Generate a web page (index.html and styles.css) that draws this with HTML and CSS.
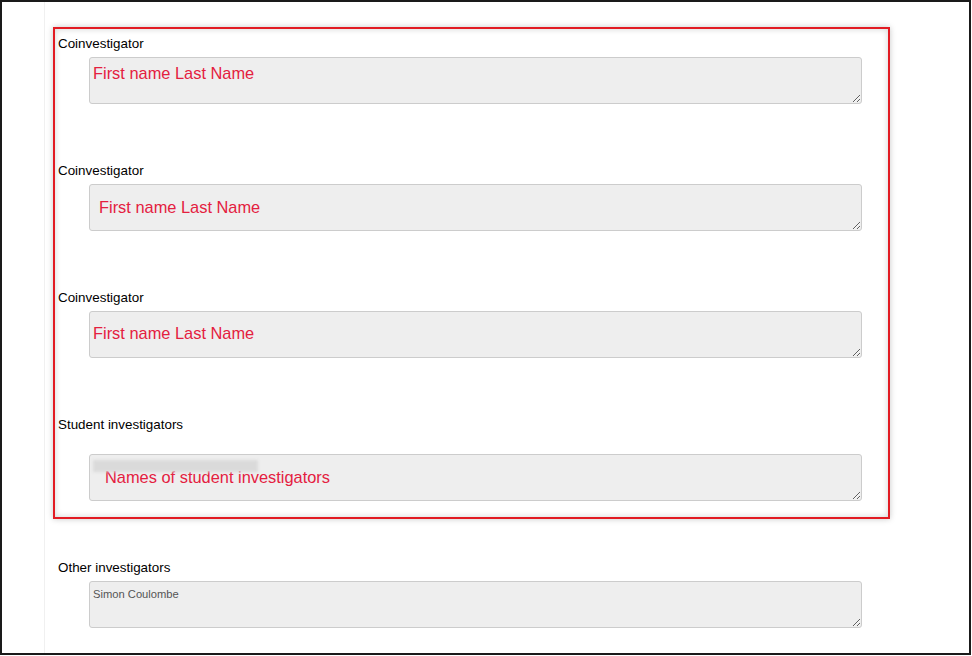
FILE: index.html
```html
<!DOCTYPE html>
<html lang="en">
<head>
  <meta charset="UTF-8">
  <title>Investigators</title>
  <link rel="stylesheet" href="styles.css">
</head>
<body>

  <div class="frame">
    <div class="panel">

      <!-- Highlighted block -->
      <div class="highlight">
        <div class="group">
          <label class="label">Coinvestigator</label>
          <textarea class="field note field-1">First name Last Name</textarea>
        </div>
        <div class="group">
          <label class="label">Coinvestigator</label>
          <textarea class="field note field-2">First name Last Name</textarea>
        </div>
        <div class="group">
          <label class="label">Coinvestigator</label>
          <textarea class="field note field-3">First name Last Name</textarea>
        </div>
        <div class="group group-student">
          <label class="label">Student investigators</label>
          <div class="field-wrap">
            <textarea class="field note field-4">Names of student investigators</textarea>
            <span class="blurred"></span>
          </div>
        </div>
      </div>

      <div class="group group-other">
        <label class="label">Other investigators</label>
        <textarea class="field field-other">Simon Coulombe</textarea>
      </div>

    </div>
  </div>

</body>
</html>
```

FILE: styles.css
```css
* {
  margin: 0;
  padding: 0;
  box-sizing: border-box;
}

body, html {
  height: 100%;
  background: #fff;
  font-family: 'Liberation Sans', Arial, sans-serif;
  overflow: hidden;
}

.frame {
  width: 971px;
  height: 655px;
  border: 2px solid #1a1a1a;
  overflow: hidden;
}

.panel {
  margin-left: 42px;
  height: 100%;
  border-left: 1px solid #f0f0f0;
  padding-left: 8px;
  padding-top: 25px;
}

.highlight {
  width: 837px;
  border: 2px solid #e21b23;
  padding: 8px 3px 16px;
  box-shadow: 0 0 6px rgba(0,0,0,0.22), inset 0 0 6px rgba(0,0,0,0.18);
}

.group + .group {
  margin-top: 60px;
}

.label {
  display: block;
  font-size: 13.4px;
  line-height: 14px;
  color: #000;
}

.field {
  display: block;
  width: 773px;
  height: 47px;
  margin-top: 6px;
  margin-left: 31px;
  background: #eee;
  border: 1px solid #ccc;
  border-radius: 3px;
  font-family: 'Liberation Sans', Arial, sans-serif;
  overflow: hidden;
  outline: none;
}

.note {
  font-size: 16.4px;
  line-height: 18px;
  color: #e4203f;
}

.field-1 { padding: 6px 3px 0; }
.field-2 { padding: 13px 9px 0; }
.field-3 { padding: 12px 3px 0; }
.field-4 { padding: 13px 15px 0; margin: 0; }

.group-student .field-wrap {
  position: relative;
  width: 773px;
  margin-top: 22px;
  margin-left: 31px;
}

.blurred {
  position: absolute;
  left: 4px;
  top: 6px;
  width: 165px;
  height: 12px;
  background: #dadada;
  filter: blur(1.5px);
}

.group-other {
  margin-top: 42px;
  padding-left: 5px;
}

.field-other {
  margin-left: 31px;
  padding: 6px 3px 0;
  font-size: 11.2px;
  line-height: 13px;
  color: #555;
}
```
